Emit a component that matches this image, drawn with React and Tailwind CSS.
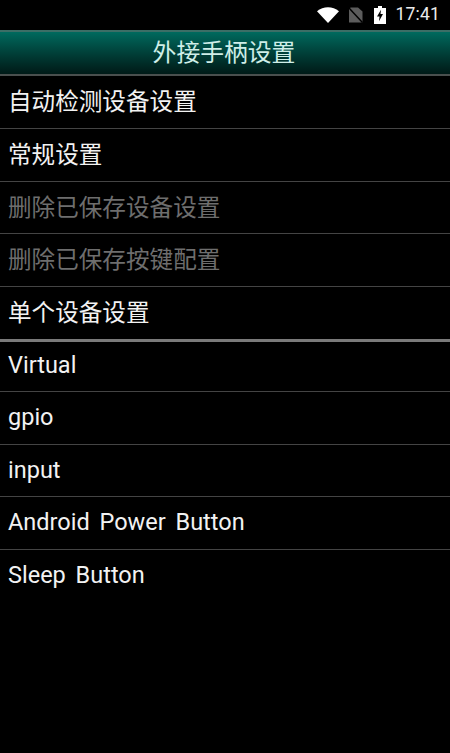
const font = { fontFamily: 'Roboto, "Noto Sans CJK SC", sans-serif' };

const settings = [
  { label: '自动检测设备设置' },
  { label: '常规设置' },
  { label: '删除已保存设备设置', disabled: true },
  { label: '删除已保存按键配置', disabled: true },
  { label: '单个设备设置' },
];

const devices = ['Virtual', 'gpio', 'input', 'Android Power Button', 'Sleep Button'];

export default function App() {
  return (
    <div className="w-[450px] h-[753px] bg-black overflow-hidden" style={font}>
      <div className="h-[30px] flex items-center justify-end pr-[10px]">
        <svg width="22" height="16" viewBox="0 0 22 16" className="mr-[9px]">
          <path d="M0 4.2 C6.3 -1.2 15.7 -1.2 22 4.2 L11 16 Z" fill="#fff" />
        </svg>
        <svg width="15" height="16" viewBox="0 0 15 18" preserveAspectRatio="none" className="mr-[11px]">
          <path d="M3 0.5 H10 L14.5 5 V17.5 H1 V1.5 Z" fill="#5c5c5c" />
          <path d="M0.5 0.5 L14.5 17.5" stroke="#000" strokeWidth="1.5" />
        </svg>
        <svg width="12" height="18" viewBox="0 0 12 19" preserveAspectRatio="none" className="mr-[9px]">
          <path d="M4 0 H8 V2 H12 V19 H0 V2 H4 Z" fill="#fff" />
          <path d="M7 4 L3 11 H5.5 L5 16 L9 8.5 H6.5 Z" fill="#000" />
        </svg>
        <span className="text-[17.5px] leading-none text-[#ececec] tracking-[0.2px]">17:41</span>
      </div>
      <div className="h-[46px] border-y-2 border-t-[#3c6e66] border-b-[#4a4f4e] bg-gradient-to-b from-[#006a5e] to-[#001a17] flex items-center justify-center pt-[2px] pr-[2px]">
        <span className="text-[23.8px] leading-none text-[#cfeee8]">外接手柄设置</span>
      </div>
      {settings.map((s, i) => (
        <div key={i} className="h-[52.75px] border-b border-[#444444] pl-2 pt-[2px] flex items-center">
          <span className={`text-[23.6px] leading-none ${s.disabled ? 'text-[#6e6e6e]' : 'text-[#f2f2f2]'}`}>
            {s.label}
          </span>
        </div>
      ))}
      <div className="relative h-[3px] -mt-px -mb-[2px] bg-[#7a7a7a]" />
      {devices.map((d, i) => (
        <div key={i} className={`h-[52.5px] pl-2 flex items-center ${i < devices.length - 1 ? 'border-b border-[#444444]' : ''}`}>
          <span className="text-[23.5px] leading-none text-[#f2f2f2] [word-spacing:4px]">{d}</span>
        </div>
      ))}
    </div>
  );
}
